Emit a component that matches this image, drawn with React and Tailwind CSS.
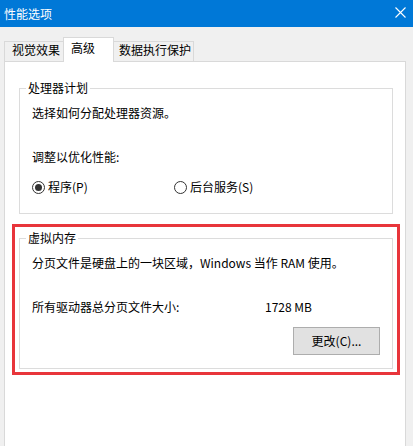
import React from 'react';

const Radio = ({ checked, label, className = '' }) => (
  <label className={`flex items-center gap-[3px] ${className}`}>
    <span className="w-[13px] h-[13px] rounded-full border border-[#333333] bg-white flex items-center justify-center">
      {checked && <span className="w-[7px] h-[7px] rounded-full bg-[#333333]" />}
    </span>
    <span>{label}</span>
  </label>
);

const GroupBox = ({ title, children }) => (
  <fieldset className="w-[374px] border border-[#dcdcdc]">
    <legend className="ml-[6px] px-[2px] leading-[16px]">{title}</legend>
    {children}
  </fieldset>
);

export default function App() {
  return (
    <div
      className="w-[413px] h-[446px] overflow-hidden bg-[#f0f0f0] text-[12px] leading-[16px] text-black"
      style={{ fontFamily: '"Noto Sans CJK SC", "Noto Sans", sans-serif' }}
    >
      {/* Title bar */}
      <div className="h-[27px] bg-[#0078d7] flex items-center justify-between pl-[4px] pr-[7px] text-white">
        <span>性能选项</span>
        <svg width="11" height="11" viewBox="0 0 11 11" className="mt-[-2px]">
          <path d="M0.5 0.5 L10.5 10.5 M10.5 0.5 L0.5 10.5" stroke="white" strokeWidth="1.1" fill="none" />
        </svg>
      </div>

      {/* Tabs */}
      <div className="flex items-end pl-[4px] pt-[10px]">
        <div className="w-[59px] h-[20px] border-l border-t border-[#d9d9d9] pl-[7px] pt-0">视觉效果</div>
        <div className="relative z-10 -mb-px w-[51px] h-[25px] bg-white border-l border-t border-r border-[#d9d9d9] pl-[7px] pt-[2px]">高级</div>
        <div className="w-[80px] h-[20px] border-t border-r border-[#d9d9d9] pl-[5px]">数据执行保护</div>
      </div>

      {/* Tab panel */}
      <div className="ml-[4px] w-[402px] h-[400px] bg-white border border-[#d9d9d9]">
        <div className="ml-[14px] mt-[18px]">
          <GroupBox title="处理器计划">
            <div className="px-[12px] pb-[18px]">
              <p className="mt-[9px]">选择如何分配处理器资源。</p>
              <p className="mt-[28px]">调整以优化性能:</p>
              <div className="mt-[14px] flex items-center">
                <Radio checked label="程序(P)" className="w-[142px]" />
                <Radio label="后台服务(S)" />
              </div>
            </div>
          </GroupBox>
        </div>

        {/* Highlighted virtual memory group */}
        <div className="ml-[7px] mt-[10px] w-[388px] border-[3px] border-[#e8353b] pl-[4px] pt-[3px] pb-[3px]">
          <GroupBox title="虚拟内存">
            <div className="px-[12px] pb-[13px]">
              <p className="mt-[9px] whitespace-nowrap">分页文件是硬盘上的一块区域，Windows 当作 RAM 使用。</p>
              <div className="mt-[28px] flex">
                <span className="w-[233px]">所有驱动器总分页文件大小:</span>
                <span>1728 MB</span>
              </div>
              <div className="mt-[12px] flex justify-end">
                <button className="w-[87px] h-[28px] bg-[#e1e1e1] border border-[#adadad] flex items-center justify-center">
                  更改(C)...
                </button>
              </div>
            </div>
          </GroupBox>
        </div>
      </div>
    </div>
  );
}
